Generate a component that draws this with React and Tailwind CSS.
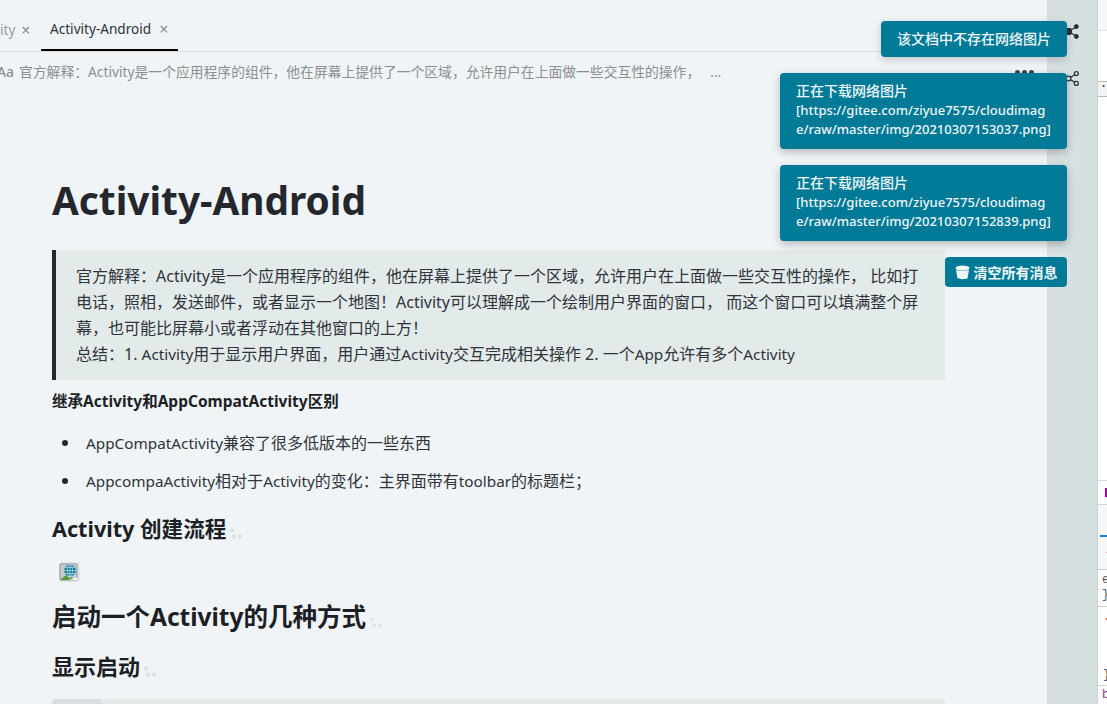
const FONT = "font-['Noto_Sans','Noto_Sans_CJK_SC',sans-serif]";

function ShareIcon({ outline }) {
  return (
    <svg width="14" height="15" viewBox="0 0 14 15" fill={outline ? "none" : "#2b2f38"} stroke="#2b2f38" strokeWidth={outline ? 1.2 : 1}>
      <path d="M3.5 7.5 L11 3 M3.5 7.5 L11 12" fill="none" strokeWidth="1.3" />
      {outline ? <circle cx="3.5" cy="7.5" r="2.4" fill="#d7e0e0" /> : <rect x="0.5" y="4.5" width="6" height="6" rx="1.5" />}
      <circle cx="11.3" cy="2.6" r="2" fill={outline ? "#d7e0e0" : "#2b2f38"} />
      <circle cx="11.3" cy="12.4" r="2" fill={outline ? "#d7e0e0" : "#2b2f38"} />
    </svg>
  );
}

function Dots({ color }) {
  return (
    <svg width="13" height="11" viewBox="0 0 13 11" fill={color} className="ml-[4px] inline-block align-[-2px]">
      <circle cx="2" cy="2.5" r="2" />
      <circle cx="4" cy="8.5" r="2" />
      <circle cx="10" cy="8.5" r="2" />
    </svg>
  );
}

function GlobeImage() {
  return (
    <svg width="21" height="20" viewBox="0 0 21 20">
      <rect width="21" height="20" rx="3" fill="#dfe3e4" />
      <rect x="1" y="2" width="17" height="16" rx="1" fill="#c3ccd3" stroke="#6f7c86" strokeWidth="0.7" />
      <path d="M1 18 L7 13 L10 16 L13 15 L15 18 Z" fill="#4f9a3c" />
      <circle cx="11" cy="8.5" r="5.8" fill="#147f97" />
      <path d="M5.2 8.5 H16.8 M11 2.7 V14.3 M6.2 5.5 H15.8 M6.2 11.5 H15.8" stroke="#cfe9ef" strokeWidth="0.6" fill="none" />
      <ellipse cx="11" cy="8.5" rx="2.6" ry="5.8" stroke="#cfe9ef" strokeWidth="0.6" fill="none" />
      <path d="M10 18 L17 15 L19 18 Z" fill="#f2f6f3" />
    </svg>
  );
}

function DownloadToast({ name }) {
  return (
    <div className="h-[76px] w-[287px] whitespace-nowrap rounded-[4px] bg-[#007a96] pl-4 pr-2 pt-[8px] text-[14px] font-medium leading-[19.6px] text-[#f0f5f7] shadow-[0_3px_8px_rgba(0,0,0,0.25)]">
      <div>正在下载网络图片</div>
      <div className="text-[13px]">[https://gitee.com/ziyue7575/cloudimag</div>
      <div className="text-[13px]">e/raw/master/img/{name}.png]</div>
    </div>
  );
}

function Toasts() {
  return (
    <div className="absolute right-[40px] top-[21px] flex flex-col items-end gap-4">
      <div className="h-[36px] w-[186px] rounded-[4px] bg-[#007a96] text-center text-[14px] font-medium leading-[36px] text-[#f0f5f7] shadow-[0_3px_8px_rgba(0,0,0,0.18)]">
        该文档中不存在网络图片
      </div>
      <DownloadToast name="20210307153037" />
      <DownloadToast name="20210307152839" />
      <div className="flex h-[30px] w-[122px] items-center justify-center gap-[4px] rounded-[4px] bg-[#007a96] text-[14px] font-bold text-[#f0f5f7]">
        <svg width="15" height="15" viewBox="0 0 15 15" fill="#f0f5f7">
          <ellipse cx="7.5" cy="3" rx="7" ry="2.4" />
          <path d="M1 4.6 C3 6.2 12 6.2 14 4.6 L12.6 13 C12.2 14.6 2.8 14.6 2.4 13 Z" />
        </svg>
        清空所有消息
      </div>
    </div>
  );
}

function DevTools() {
  return (
    <div className="h-full w-[10px] shrink-0 overflow-hidden border-l border-[#c9cfd2] bg-white font-['Liberation_Mono',monospace] text-[12px] leading-[15px]">
      <div className="h-[31px] border-b border-[#e1e1e1] bg-[#f6f7f8]" />
      <div className="mt-[50px] h-[16px] border-y border-[#b8b8b8] bg-[#f2f2f2] pl-[2px] leading-[10px] text-[#222]">·</div>
      <div className="mt-[383px] flex h-[25px] items-center border-y border-[#d5d8da] pl-[7px]">
        <div className="h-[9px] w-[3px] bg-[#a000a8]" />
      </div>
      <div className="h-[64px] bg-[#f7f8f9] pl-[2px] pt-[30px]">
        <div className="h-[2px] w-full bg-[#1a7fd8]" />
        <div className="mt-[9px] pl-[5px] text-[#a67cc0]">{"{"}</div>
      </div>
      <div className="h-[38px] border-y border-[#c9cfd2] pl-[4px] pt-[3px] text-[#555]">
        <div>e</div>
        <div>{"}"}</div>
      </div>
      <div className="h-[79px] border-b border-[#d5d8da] pl-[5px] pt-[3px] text-[#555]">
        <div className="text-[#c4503c]">.</div>
        <div className="mt-[43px]">{"}"}</div>
      </div>
      <div className="pl-[4px] pt-[2px] text-[#8a3a9a]">b</div>
    </div>
  );
}

function Sidebar() {
  return (
    <div className="flex h-full w-[50px] shrink-0 flex-col items-end bg-[#d7e0e0] pr-[18px]">
      <div className="mt-[24px]"><ShareIcon /></div>
      <div className="mt-[32px]"><ShareIcon outline /></div>
    </div>
  );
}

function TabBar() {
  return (
    <div className="flex h-[52px] items-end border-b border-[#dcdfe0] text-[13.6px] text-[#4a4e55]">
      <div className="flex h-[51px] w-[41px] items-center pt-[9px]">
        <span className="text-[#9a9da1]">ity</span>
        <span className="ml-[6px] text-[16px] leading-none text-[#8a8d91]">×</span>
      </div>
      <div className="flex h-[51px] w-[137px] items-center border-b-[2px] border-black pl-[9px] pt-[9px]">
        <span className="text-[#2f333a]">Activity-Android</span>
        <span className="ml-[8px] text-[16px] leading-none text-[#8a8d91]">×</span>
      </div>
    </div>
  );
}

function OutlineBar() {
  return (
    <div className="flex h-[40px] items-center pr-[13px] text-[13.8px] text-[#8b8f94]">
      <span className="ml-[-3px] w-[22px] shrink-0 font-medium">Aa</span>
      <span className="truncate">官方解释：Activity是一个应用程序的组件，他在屏幕上提供了一个区域，允许用户在上面做一些交互性的操作，</span>
      <span className="ml-[10px] shrink-0">...</span>
      <span className="ml-auto flex shrink-0 gap-[2px]">
        <i className="h-[5px] w-[5px] rounded-full bg-[#3e4249]" />
        <i className="h-[5px] w-[5px] rounded-full bg-[#3e4249]" />
        <i className="h-[5px] w-[5px] rounded-full bg-[#3e4249]" />
      </span>
    </div>
  );
}

// latin runs are set a bit smaller than the CJK around them
function Lat({ children }) {
  return <span className="text-[15.3px]">{children}</span>;
}

function Article() {
  return (
    <div className="ml-[52px] w-[893px] text-[#24272e]">
      <h1 className="mt-[79px] h-[58px] text-[38.8px] font-bold leading-[58px] text-[#24272e]">Activity-Android</h1>
      <blockquote className="mt-[21px] h-[130px] border-l-[4px] border-[#24272e] bg-[#e3eaea] pl-[20px] pt-[13px] text-[16px] leading-[26px] text-[#2f333a]">
        官方解释：Activity是一个应用程序的组件，他在屏幕上提供了一个区域，允许用户在上面做一些交互性的操作， 比如打
        <br />
        电话，照相，发送邮件，或者显示一个地图！Activity可以理解成一个绘制用户界面的窗口， 而这个窗口可以填满整个屏
        <br />
        幕，也可能比屏幕小或者浮动在其他窗口的上方！
        <br />
        总结：1. <Lat>Activity</Lat>用于显示用户界面，用户通过<Lat>Activity</Lat>交互完成相关操作 2. 一个<Lat>App</Lat>允许有多个<Lat>Activity</Lat>
      </blockquote>
      <p className="mt-[8px] h-[26px] text-[15.5px] font-bold leading-[26px] text-[#1c1f25]">继承Activity和AppCompatActivity区别</p>
      <ul className="mt-[16px] flex flex-col gap-[12px] text-[16px] leading-[26px] text-[#2f333a]">
        <li className="flex items-center">
          <i className="ml-[10px] mr-[18px] h-[6px] w-[6px] rounded-full bg-[#24272e]" />
          <span><Lat>AppCompatActivity</Lat>兼容了很多低版本的一些东西</span>
        </li>
        <li className="flex items-center">
          <i className="ml-[10px] mr-[18px] h-[6px] w-[6px] rounded-full bg-[#24272e]" />
          <span><Lat>AppcompaActivity</Lat>相对于<Lat>Activity</Lat>的变化：主界面带有<Lat>toolbar</Lat>的标题栏；</span>
        </li>
      </ul>
      <h3 className="mt-[20px] h-[30px] text-[21.6px] font-bold leading-[30px] text-[#1c1f25]">
        Activity 创建流程<Dots color="#d5e3ea" />
      </h3>
      <div className="ml-[7px] mt-[18px] h-[20px]"><GlobeImage /></div>
      <h2 className="mt-[17px] h-[36px] text-[24.5px] font-bold leading-[36px] text-[#1c1f25]">
        启动一个Activity的几种方式<Dots color="#dfe3ef" />
      </h2>
      <h3 className="mt-[16px] h-[30px] text-[22px] font-bold leading-[30px] text-[#1c1f25]">
        显示启动<Dots color="#d5e3ea" />
      </h3>
      <div className="mt-[18px] flex h-[40px] rounded-t-[4px] bg-[#e3eaea]">
        <div className="w-[49px] rounded-tl-[4px] bg-[#d7e0e0]" />
      </div>
    </div>
  );
}

export default function App() {
  return (
    <div className={`relative flex h-[704px] w-[1107px] overflow-hidden bg-[#f0f4f6] ${FONT}`}>
      <div className="h-full w-[1047px] shrink-0 overflow-hidden">
        <TabBar />
        <OutlineBar />
        <Article />
      </div>
      <Sidebar />
      <DevTools />
      <Toasts />
    </div>
  );
}
